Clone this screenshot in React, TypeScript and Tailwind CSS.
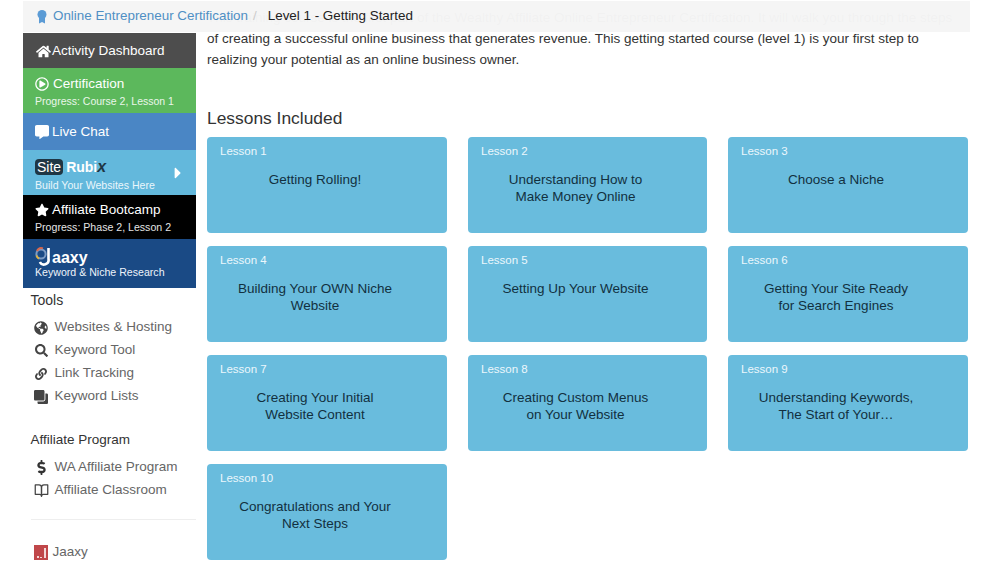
import {
  FaCaretRight,
  FaClone,
  FaCommentAlt,
  FaDollarSign,
  FaGlobeAmericas,
  FaHome,
  FaLink,
  FaRegPlayCircle,
  FaSearch,
  FaStar,
} from "react-icons/fa";
import { FiBookOpen } from "react-icons/fi";
import type { ReactNode } from "react";

const lessons = [
  ["Getting Rolling!"],
  ["Understanding How to", "Make Money Online"],
  ["Choose a Niche"],
  ["Building Your OWN Niche", "Website"],
  ["Setting Up Your Website"],
  ["Getting Your Site Ready", "for Search Engines"],
  ["Creating Your Initial", "Website Content"],
  ["Creating Custom Menus", "on Your Website"],
  ["Understanding Keywords,", "The Start of Your…"],
  ["Congratulations and Your", "Next Steps"],
];

function ToolLink({ icon, label }: { icon: ReactNode; label: string }) {
  return (
    <div className="flex h-[23px] items-center text-[13.5px] text-[#666]">
      <span className="mr-[3px] flex w-[21px] justify-center text-[14px] text-[#444]">{icon}</span>
      <span>{label}</span>
    </div>
  );
}

function Ribbon() {
  return (
    <svg width="10" height="14" viewBox="0 0 10 14" className="text-[#5b9bd5]" fill="currentColor">
      <circle cx="5" cy="4.5" r="4.5" />
      <path d="M2 8h6V13.6L5 12 2 13.6z" />
    </svg>
  );
}

function JaaxyIcon() {
  return (
    <svg width="14" height="15" viewBox="0 0 14 15">
      <rect width="14" height="15" fill="#c0474a" />
      <rect x="3" y="11" width="2" height="2" fill="#f3d8d8" />
      <rect x="6" y="12" width="2" height="1" fill="#f3d8d8" />
      <rect x="10" y="3" width="2" height="10" fill="#f3d8d8" />
    </svg>
  );
}

function JaaxySwirl() {
  return (
    <svg width="17" height="19" viewBox="0 0 17 19" fill="none" strokeWidth="2">
      <circle cx="6" cy="7" r="4.6" stroke="#7d9cc4" />
      <path d="M2 4a5 5 0 0 1 6-2.6" stroke="#d9694f" />
      <path d="M1.4 8.500a5 5 0 0 0 2.600 3" stroke="#e0b341" />
      <path d="M13.500 1v11a4.600 4.600 0 0 1-8.600 3" stroke="#ffffff" strokeWidth="2.600" />
    </svg>
  );
}

export default function App() {
  return (
    <div className="relative h-[565px] w-[996px] overflow-hidden bg-white font-['Liberation_Sans',Arial,sans-serif] text-[#333]">
      {/* breadcrumb lies over the top of the page text */}
      <div className="absolute left-[23px] top-px z-10 flex h-[31px] w-[947px] items-center bg-[#f5f5f5]/[0.98] pl-[14px] text-[13.4px]">
        <Ribbon />
        <span className="ml-[6px] text-[#4f8fc4]">Online Entrepreneur Certification</span>
        <span className="ml-[5px] text-[#ccc]">/</span>
        <span className="ml-[11px] text-[#222]">Level 1 - Getting Started</span>
      </div>

      <div className="flex pl-[23px]">
        {/* sidebar */}
        <aside className="w-[173px] shrink-0 pt-[33px]">
          <div className="flex h-[35px] items-center gap-[1px] bg-[#4d4d4d] pl-[13px] pt-[1px] text-[13.5px] text-white">
            <FaHome className="text-[15px]" />
            Activity Dashboard
          </div>
          <div className="h-[45px] bg-[#5cb85c] pl-[12px] pt-[8px] text-white">
            <div className="flex items-center gap-[4px] text-[13.5px] leading-[16px]">
              <FaRegPlayCircle className="text-[14px]" />
              Certification
            </div>
            <div className="mt-[3px] text-[10.5px] leading-[13px] text-[#eaf6ea]">Progress: Course 2, Lesson 1</div>
          </div>
          <div className="flex h-[37px] items-center gap-[3px] bg-[#4a86c5] pl-[12px] pt-[1px] text-[13.5px] text-white">
            <FaCommentAlt className="text-[14px]" />
            Live Chat
          </div>
          <div className="relative h-[45px] bg-[#63b8dc] pl-[12px] pt-[9px] text-white">
            <div className="flex items-center text-[14px] font-bold leading-[16px]">
              <span className="rounded-[4px] bg-[#1f3644] px-[2px] font-normal leading-[16px]">Site</span>
              <span className="ml-[3px]">Rubi</span>
              <span className="text-[16px] italic leading-[16px] text-[#1f3644]">x</span>
            </div>
            <div className="mt-[4px] text-[10.6px] leading-[13px] text-[#eaf6fb]">Build Your Websites Here</div>
            <FaCaretRight className="absolute right-[9px] top-[14px] text-[18px]" />
          </div>
          <div className="h-[44px] bg-black pl-[12px] pt-[7px] text-white">
            <div className="flex items-center gap-[3px] text-[13.5px] leading-[16px]">
              <FaStar className="text-[14px]" />
              Affiliate Bootcamp
            </div>
            <div className="mt-[3px] text-[10.6px] leading-[13px] text-[#e5e5e5]">Progress: Phase 2, Lesson 2</div>
          </div>
          <div className="h-[49px] bg-[#1a4a85] pl-[12px] pt-[8px] text-white">
            <div className="flex items-end text-[16px] font-bold leading-[17px]">
              <JaaxySwirl />
              <span>aaxy</span>
            </div>
            <div className="text-[10.6px] leading-[13px] text-[#eef3fa]">Keyword &amp; Niche Research</div>
          </div>

          <div className="pl-[7.5px] pt-[4px]">
            <div className="text-[14px] leading-[16px]">Tools</div>
            <div className="mt-[8px]">
              <ToolLink icon={<FaGlobeAmericas />} label="Websites & Hosting" />
              <ToolLink icon={<FaSearch className="text-[13px]" />} label="Keyword Tool" />
              <ToolLink icon={<FaLink className="text-[12px]" />} label="Link Tracking" />
              <ToolLink icon={<FaClone className="-scale-x-100" />} label="Keyword Lists" />
            </div>
            <div className="mt-[24px] text-[13.5px] leading-[16px]">Affiliate Program</div>
            <div className="mt-[8px]">
              <ToolLink icon={<FaDollarSign className="text-[15px] text-[#333]" />} label="WA Affiliate Program" />
              <ToolLink icon={<FiBookOpen className="text-[15px]" />} label="Affiliate Classroom" />
            </div>
            <div className="mt-[17px] border-t border-[#eee]" />
            <div className="mt-[24px] flex items-center gap-[5px] pl-[3px] text-[13.5px] leading-[16px] text-[#666]">
              <JaaxyIcon />
              Jaaxy
            </div>
          </div>
        </aside>

        {/* course content */}
        <main className="ml-[11px] w-[761px] pt-[7px]">
          <p className="whitespace-nowrap text-[13.5px] leading-[21px]">
            This training course is the first part of the Wealthy Affiliate Online Entrepreneur Certification. It will walk you through the steps
            <br />
            of creating a successful online business that generates revenue. This getting started course (level 1) is your first step to
            <br />
            realizing your potential as an online business owner.
          </p>
          <h2 className="mt-[37px] text-[17.4px] leading-[22px]">Lessons Included</h2>
          <div className="mt-[8px] grid grid-cols-[240px_239px_240px] gap-x-[21px] gap-y-[13px]">
            {lessons.map((lines, i) => (
              <div key={i} className="h-[96px] rounded-[4px] bg-[#69bcdd] pl-[13px] pr-[37px] pt-[7px] text-center">
                <div className="text-left text-[11.5px] leading-[14px] text-[#ecf7fc]">Lesson {i + 1}</div>
                <div className="mt-[13px] text-[13.5px] leading-[17px] text-[#12303f]">
                  {lines.map((line) => (
                    <div key={line}>{line}</div>
                  ))}
                </div>
              </div>
            ))}
          </div>
        </main>
      </div>
    </div>
  );
}
